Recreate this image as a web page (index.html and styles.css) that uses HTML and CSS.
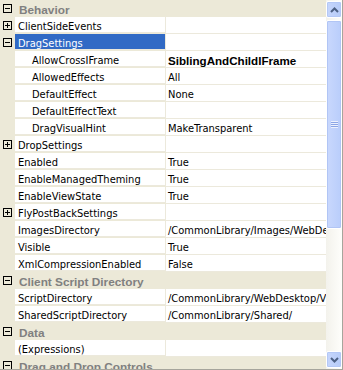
FILE: index.html
```html
<!DOCTYPE html>
<html lang="en">
<head>
    <meta charset="UTF-8">
    <title>Properties</title>
    <link rel="stylesheet" href="styles.css">
</head>
<body>

<div class="property-grid">
    <div class="rows">
        <div class="row cat">
            <div class="gutter"><span class="toggle minus"></span></div>
            <div class="cat-label">Behavior</div>
        </div>
        <div class="row">
            <div class="gutter"><span class="toggle plus"></span></div>
            <div class="name">ClientSideEvents</div>
            <div class="value"></div>
        </div>
        <div class="row">
            <div class="gutter"><span class="toggle minus"></span></div>
            <div class="name selected">DragSettings</div>
            <div class="value"></div>
        </div>
        <div class="row">
            <div class="gutter"></div>
            <div class="name child">AllowCrossIFrame</div>
            <div class="value bold">SiblingAndChildIFrame</div>
        </div>
        <div class="row">
            <div class="gutter"></div>
            <div class="name child">AllowedEffects</div>
            <div class="value">All</div>
        </div>
        <div class="row">
            <div class="gutter"></div>
            <div class="name child">DefaultEffect</div>
            <div class="value">None</div>
        </div>
        <div class="row">
            <div class="gutter"></div>
            <div class="name child">DefaultEffectText</div>
            <div class="value"></div>
        </div>
        <div class="row">
            <div class="gutter"></div>
            <div class="name child">DragVisualHint</div>
            <div class="value">MakeTransparent</div>
        </div>
        <div class="row">
            <div class="gutter"><span class="toggle plus"></span></div>
            <div class="name">DropSettings</div>
            <div class="value"></div>
        </div>
        <div class="row">
            <div class="gutter"></div>
            <div class="name">Enabled</div>
            <div class="value">True</div>
        </div>
        <div class="row">
            <div class="gutter"></div>
            <div class="name">EnableManagedTheming</div>
            <div class="value">True</div>
        </div>
        <div class="row">
            <div class="gutter"></div>
            <div class="name">EnableViewState</div>
            <div class="value">True</div>
        </div>
        <div class="row">
            <div class="gutter"><span class="toggle plus"></span></div>
            <div class="name">FlyPostBackSettings</div>
            <div class="value"></div>
        </div>
        <div class="row">
            <div class="gutter"></div>
            <div class="name">ImagesDirectory</div>
            <div class="value">/CommonLibrary/Images/WebDesktop/</div>
        </div>
        <div class="row">
            <div class="gutter"></div>
            <div class="name">Visible</div>
            <div class="value">True</div>
        </div>
        <div class="row">
            <div class="gutter"></div>
            <div class="name">XmlCompressionEnabled</div>
            <div class="value">False</div>
        </div>
        <div class="row cat">
            <div class="gutter"><span class="toggle minus"></span></div>
            <div class="cat-label">Client Script Directory</div>
        </div>
        <div class="row">
            <div class="gutter"></div>
            <div class="name">ScriptDirectory</div>
            <div class="value">/CommonLibrary/WebDesktop/V2/</div>
        </div>
        <div class="row">
            <div class="gutter"></div>
            <div class="name">SharedScriptDirectory</div>
            <div class="value">/CommonLibrary/Shared/</div>
        </div>
        <div class="row cat">
            <div class="gutter"><span class="toggle minus"></span></div>
            <div class="cat-label">Data</div>
        </div>
        <div class="row">
            <div class="gutter"></div>
            <div class="name">(Expressions)</div>
            <div class="value"></div>
        </div>
        <div class="row cat">
            <div class="gutter"><span class="toggle minus"></span></div>
            <div class="cat-label">Drag and Drop Controls</div>
        </div>
    </div>

    <div class="scrollbar">
        <div class="sb-button">
            <svg width="9" height="6" viewBox="0 0 9 6"><path d="M1 5 L4.5 1.5 L8 5" fill="none" stroke="#4d6185" stroke-width="2"/></svg>
        </div>
        <div class="sb-track">
            <div class="sb-thumb"><span class="grip"></span></div>
        </div>
        <div class="sb-button">
            <svg width="9" height="6" viewBox="0 0 9 6"><path d="M1 1 L4.5 4.5 L8 1" fill="none" stroke="#4d6185" stroke-width="2"/></svg>
        </div>
    </div>
</div>

</body>
</html>
```

FILE: styles.css
```css
body {
    margin: 0;
    font-family: 'DejaVu Sans Condensed', 'DejaVu Sans', Verdana, sans-serif;
    font-size: 11px;
    background-color: #ece9d8;
}
.property-grid {
    display: flex;
    width: 342px;
    height: 369px;
    overflow: hidden;
    background-color: #ece9d8;
    border-right: 1px solid #a6a59c;
    border-bottom: 1px solid #a6a59c;
}
.rows {
    width: 326px;
    flex: none;
    overflow: hidden;
}
.row {
    display: flex;
    height: 17px;
}
.gutter {
    width: 15px;
    flex: none;
    display: flex;
    align-items: center;
    padding-left: 3px;
    box-sizing: border-box;
    background-color: #ece9d8;
}
.toggle {
    position: relative;
    width: 9px;
    height: 9px;
    box-sizing: border-box;
    border: 1px solid #000;
}
.toggle::before {
    content: "";
    position: absolute;
    left: 1px;
    top: 3px;
    width: 5px;
    height: 1px;
    background-color: #000;
}
.toggle.plus::after {
    content: "";
    position: absolute;
    left: 3px;
    top: 1px;
    width: 1px;
    height: 5px;
    background-color: #000;
}
.name,
.value {
    height: 16px;
    line-height: 19px;
    border-bottom: 1px solid #ece9dc;
    background-color: #fff;
    color: #000;
    white-space: nowrap;
    overflow: hidden;
}
.name {
    width: 151px;
    flex: none;
    box-sizing: border-box;
    padding-left: 3px;
    border-right: 1px solid #ece9dc;
}
.name.child {
    padding-left: 17px;
}
.name.selected {
    background-color: #316ac5;
    color: #fff;
}
.value {
    flex: 1;
    padding-left: 2px;
}
.value.bold {
    font-family: 'Liberation Sans', Arial, sans-serif;
    font-size: 11.6px;
    font-weight: bold;
}
.cat-label {
    flex: 1;
    padding: 1px 0 0 4px;
    line-height: 18px;
    font-family: 'Liberation Sans', Arial, sans-serif;
    font-size: 11.8px;
    font-weight: bold;
    color: #808080;
    white-space: nowrap;
}
.scrollbar {
    width: 16px;
    flex: none;
    display: flex;
    flex-direction: column;
    background: linear-gradient(to right, #f3f2ec, #fefefb);
}
.sb-button {
    height: 15px;
    margin: 1px 0;
    flex: none;
    display: flex;
    align-items: center;
    justify-content: center;
    border: 1px solid #fff;
    border-radius: 2px;
    background: linear-gradient(to right, #c6d6fc, #b6cbf8);
    box-shadow: inset 0 0 0 1px #b4c8f6;
}
.sb-track {
    flex: 1;
    padding-top: 1px;
}
.sb-thumb {
    height: 209px;
    display: flex;
    align-items: center;
    justify-content: center;
    box-sizing: border-box;
    border: 1px solid #fff;
    border-radius: 2px;
    background: linear-gradient(to right, #c9d8fd, #b9cdfb);
    box-shadow: inset 0 0 0 1px #b1c5f5;
}
.grip {
    width: 7px;
    height: 7px;
    background: repeating-linear-gradient(to bottom, #eef2fd 0, #eef2fd 1px, #8ca6e6 1px, #8ca6e6 2px);
}
```
